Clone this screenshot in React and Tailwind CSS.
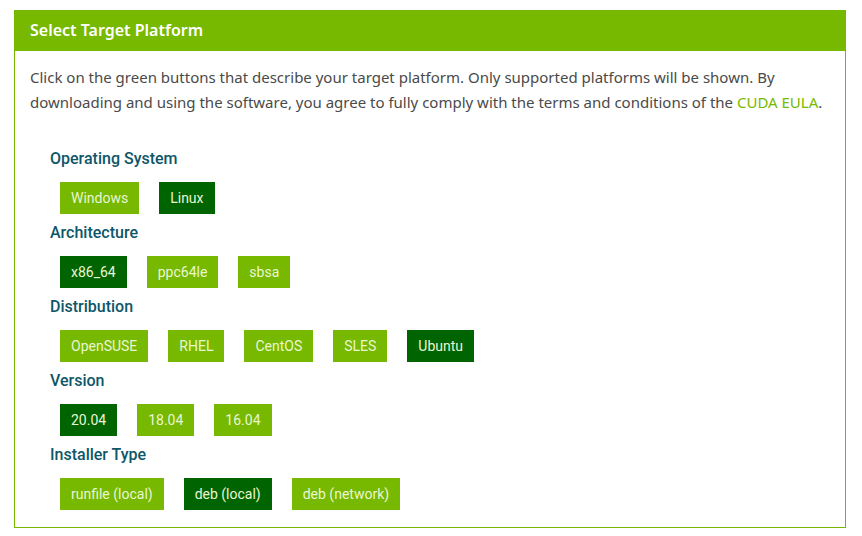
import { useState } from "react";

const groups = [
  { label: "Operating System", options: ["Windows", "Linux"], selected: "Linux" },
  { label: "Architecture", options: ["x86_64", "ppc64le", "sbsa"], selected: "x86_64" },
  {
    label: "Distribution",
    options: ["OpenSUSE", "RHEL", "CentOS", "SLES", "Ubuntu"],
    selected: "Ubuntu",
  },
  { label: "Version", options: ["20.04", "18.04", "16.04"], selected: "20.04" },
  {
    label: "Installer Type",
    options: ["runfile (local)", "deb (local)", "deb (network)"],
    selected: "deb (local)",
  },
];

function App() {
  let [picked, setPicked] = useState(() => groups.map((g) => g.selected));

  let pick = (groupIndex, option) => {
    let next = [...picked];
    next[groupIndex] = option;
    setPicked(next);
  };

  return (
    <div className="min-h-screen bg-white pt-[10px] pl-[14px] font-['Roboto',sans-serif]">
      <div className="w-[832px] border border-[#76b900]">
        {/* header */}
        <div className="h-[41px] -mt-px -mx-px bg-[#76b900] flex items-center px-4 pb-px text-white text-[16px] font-semibold font-['Noto_Sans',sans-serif]">
          Select Target Platform
        </div>

        <div className="px-[15px] pt-[14px] pb-[17px]">
          <p className="text-[15px] leading-[25px] text-[#4a4a4a] font-['Noto_Sans',sans-serif]">
            Click on the green buttons that describe your target platform. Only supported platforms
            will be shown. By downloading and using the software, you agree to fully comply with the
            terms and conditions of the <span className="text-[#76b900]">CUDA EULA</span>.
          </p>

          {/* selectors */}
          <div className="mt-[32px] pl-5 flex flex-col gap-[7px]">
            {groups.map((group, groupIndex) => (
              <div key={group.label}>
                <div className="text-[16px] leading-6 font-medium text-[#0e5669]">{group.label}</div>
                <div className="mt-[11px] pl-[10px] flex gap-5">
                  {group.options.map((option) => (
                    <button
                      key={option}
                      onClick={() => pick(groupIndex, option)}
                      className={`h-8 px-[11px] text-[14px] text-[#eaf6d2] cursor-pointer ${
                        picked[groupIndex] === option ? "bg-[#006400]" : "bg-[#76b900]"
                      }`}
                    >
                      {option}
                    </button>
                  ))}
                </div>
              </div>
            ))}
          </div>
        </div>
      </div>
    </div>
  );
}

export default App;
